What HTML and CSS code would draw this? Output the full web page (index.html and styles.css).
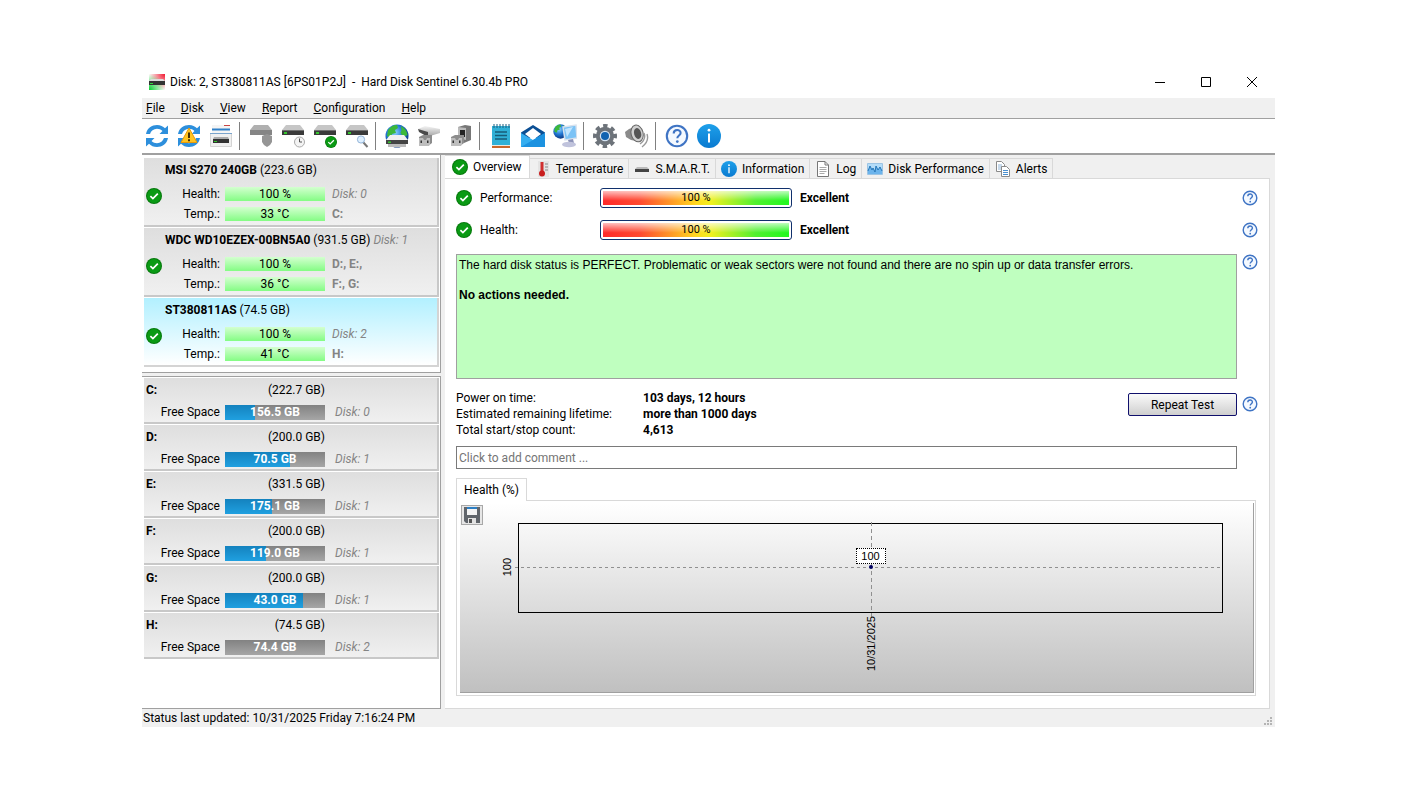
FILE: index.html
```html
<!DOCTYPE html>
<html lang="en">
<head>
  <meta charset="UTF-8">
  <meta name="viewport" content="width=device-width, initial-scale=1.0">
  <title>Hard Disk Sentinel 6.30.4b PRO</title>
  <link rel="stylesheet" href="styles.css">
</head>
<body>
  <!-- Shared icons -->
  <svg class="defs" aria-hidden="true">
    <defs>
      <linearGradient id="steel" x1="0" y1="0" x2="0" y2="1">
        <stop offset="0" stop-color="#f4f4f4"/><stop offset="1" stop-color="#a8a8a8"/>
      </linearGradient>
      <linearGradient id="azure" x1="0" y1="0" x2="0" y2="1">
        <stop offset="0" stop-color="#1ea0ea"/><stop offset="1" stop-color="#0a7ad0"/>
      </linearGradient>
      <radialGradient id="ocean" cx="0.4" cy="0.35" r="0.7">
        <stop offset="0" stop-color="#8fd6ff"/><stop offset="0.5" stop-color="#2277d4"/><stop offset="1" stop-color="#0a2f78"/>
      </radialGradient>
      <radialGradient id="logo-red" cx="1" cy="0" r="1">
        <stop offset="0" stop-color="#f01830"/><stop offset="1" stop-color="#f01830" stop-opacity="0"/>
      </radialGradient>
      <radialGradient id="logo-green" cx="0" cy="1" r="1">
        <stop offset="0" stop-color="#08d030"/><stop offset="1" stop-color="#08d030" stop-opacity="0"/>
      </radialGradient>
    </defs>
    <symbol id="ok" viewBox="0 0 16 16">
      <circle cx="8" cy="8" r="8" fill="#067a0c"/>
      <circle cx="8" cy="8" r="6.9" fill="#0a9a14"/>
      <path d="M4.4 8.2l2.5 2.4 4.9-5" fill="none" stroke="#fff" stroke-width="1.7"/>
    </symbol>
    <symbol id="help" viewBox="0 0 16 16">
      <circle cx="8" cy="8" r="6.8" fill="#f4f9ff" stroke="#3f74c4" stroke-width="1.4"/>
      <path d="M5.8 6.3c0-3 4.6-3 4.6-.3 0 1.7-2.2 1.7-2.2 3.5" fill="none" stroke="#3f74c4" stroke-width="1.4"/>
      <circle cx="8.2" cy="11.7" r="0.9" fill="#3f74c4"/>
    </symbol>
    <symbol id="info" viewBox="0 0 24 24">
      <circle cx="12" cy="12" r="12" fill="url(#azure)"/>
      <path d="M12 9.5v9" stroke="#fff" stroke-width="2"/>
      <circle cx="12" cy="6.2" r="1.4" fill="#fff"/>
    </symbol>
    <symbol id="sync" viewBox="0 0 24 24">
      <path d="M1 10C2 4 7 1 12 1c3.5 0 6 1.3 8 3.3L23 1.5V10h-8.5l3-3C16 5.5 14 4.8 12 4.8 8.5 4.8 6 7 5 10z" fill="#2d8fdc"/>
      <path d="M23 14c-1 6-6 9-11 9-3.5 0-6-1.3-8-3.3L1 22.5V14h8.500l-3 3c1.500 1.500 3.500 2.200 5.500 2.200 3.500 0 6-2.200 7-5.200z" fill="#2d8fdc"/>
    </symbol>
    <symbol id="drive" viewBox="0 0 24 24">
      <path d="M1 9L5 4h14l4 5z" fill="#c6c6c6"/>
      <path d="M1 9h22v5H1z" fill="#3a3a3a"/>
      <path d="M1 9h22v1H1z" fill="#707070"/>
      <path d="M3 11h3v2H3z" fill="#35c52e"/>
    </symbol>
    <symbol id="globe" viewBox="0 0 24 24">
      <circle cx="12" cy="12" r="11.5" fill="url(#ocean)"/>
      <path d="M3 6c3-4 6-5.3 9-5l1 3-3 2 1 3-4 1-1 4-4-2zM16 2c4 2 6 5 6.5 9l-4 2-3-4 1-3z" fill="#3cb83a"/>
    </symbol>
    <symbol id="plug" viewBox="0 0 24 24">
      <path d="M2 13l4-2h9v8l-4 3H2z" fill="#8c8c8c"/>
      <path d="M2 14h4l1 2h2l1-2h3v7l-2 1H2z" fill="#bdbdbd"/>
      <path d="M3.5 16.5H5V19H3.5zM10 16.5h1.5V19H10z" fill="#333"/>
    </symbol>
    <symbol id="page" viewBox="0 0 16 16">
      <path d="M2.5.5H10L13.500 4v11.500h-11z" fill="#fff" stroke="#777"/>
      <path d="M10 .5V4h3.500" fill="none" stroke="#777"/>
      <path d="M4.500 6.500h7M4.500 8.500h7M4.500 10.500h7M4.500 12.500h5" stroke="#aaa"/>
    </symbol>
  </svg>

  <main class="window">
    <header class="titlebar">
      <svg class="logo" viewBox="0 0 16 16">
        <path d="M0 0h16v16H0z" fill="#fff"/>
        <path d="M0 0h16v16H0z" fill="url(#logo-red)"/>
        <path d="M0 0h16v16H0z" fill="url(#logo-green)"/>
        <path d="M0 7l2-2h12l2 2z" fill="#ddd"/>
        <path d="M0 7h16v4H0z" fill="#333"/>
        <path d="M1 9h3v1H1z" fill="#2fd83a"/>
      </svg>
      <h1>Disk: 2, ST380811AS [6PS01P2J] &nbsp;- &nbsp;Hard Disk Sentinel 6.30.4b PRO</h1>
      <div class="controls">
        <button type="button" aria-label="Minimize"><svg viewBox="0 0 10 10"><path d="M0 5.5h10"/></svg></button>
        <button type="button" aria-label="Maximize"><svg viewBox="0 0 10 10"><path d="M.5.5h9v9h-9z"/></svg></button>
        <button type="button" aria-label="Close"><svg viewBox="0 0 10 10"><path d="M0 0l10 10M10 0L0 10"/></svg></button>
      </div>
    </header>

    <nav class="menu">
      <button type="button"><u>F</u>ile</button>
      <button type="button"><u>D</u>isk</button>
      <button type="button"><u>V</u>iew</button>
      <button type="button"><u>R</u>eport</button>
      <button type="button"><u>C</u>onfiguration</button>
      <button type="button"><u>H</u>elp</button>
    </nav>

    <div class="toolbar">
      <button type="button" aria-label="Refresh"><svg viewBox="0 0 24 24"><use href="#sync"/></svg></button>
      <button type="button" aria-label="Refresh warnings">
        <svg viewBox="0 0 24 24">
          <use href="#sync"/>
          <path d="M12 4l8 14.500H4z" fill="#ffc420" stroke="#e79a08" stroke-linejoin="round"/>
          <path d="M12 8.500v5.500M12 15.200v2" stroke="#332200" stroke-width="1.800"/>
        </svg>
      </button>
      <button type="button" aria-label="Disk window">
        <svg viewBox="0 0 24 24">
          <path d="M3 1h18v8H3z" fill="#f4f4f4"/>
          <path d="M15 1.500h6" stroke="#c84545"/>
          <path d="M3 5.500h18" stroke="#2f80c8" stroke-width="2"/>
          <path d="M1.500 9.500h21v13h-21z" fill="#f0f0f0" stroke="#d4d4d4"/>
          <path d="M1 9.500h22" stroke="#7aa4cc"/>
          <path d="M4 15l1-2h14l1 2z" fill="#aaa"/>
          <path d="M4 15h16v4H4z" fill="#333"/>
          <path d="M5 17h3v1H5z" fill="#35c52e"/>
        </svg>
      </button>
      <span class="sep"></span>
      <button type="button" aria-label="Remove disk">
        <svg viewBox="0 0 24 24">
          <path d="M1 6l4-5h14l4 5v1H1z" fill="#b0b0b0"/>
          <path d="M1 6h22v5H1z" fill="#858585"/>
          <path d="M13 12l5-2 5 2v6l-2 3-3 2-3-2-2-3z" fill="#959595"/>
        </svg>
      </button>
      <button type="button" aria-label="Short self test">
        <svg viewBox="0 0 24 24">
          <use href="#drive" y="-3"/>
          <circle cx="18.500" cy="18" r="5" fill="#f4f4f4" stroke="#aaa"/>
          <path d="M18.500 14.500V18H21" fill="none" stroke="#555"/>
        </svg>
      </button>
      <button type="button" aria-label="Extended self test">
        <svg viewBox="0 0 24 24"><use href="#drive" y="-3"/><use href="#ok" x="12" y="12" width="12" height="12"/></svg>
      </button>
      <button type="button" aria-label="Surface test">
        <svg viewBox="0 0 24 24">
          <use href="#drive" y="-3"/>
          <path d="M18 18l4.500 5" stroke="#777" stroke-width="2"/>
          <circle cx="16" cy="15.500" r="3.600" fill="#dff0ff" stroke="#93b4d8"/>
        </svg>
      </button>
      <span class="sep"></span>
      <button type="button" aria-label="Online disk">
        <svg viewBox="0 0 24 24">
          <use href="#globe"/>
          <path d="M1 16l4-5h14l4 5z" fill="#f0f0f0"/>
          <path d="M1 16h22v4H1z" fill="#444"/>
          <path d="M3 21.500h18" stroke="#bbb" stroke-width="3"/>
          <path d="M3 17.500h3v1.500H3z" fill="#35c52e"/>
        </svg>
      </button>
      <button type="button" aria-label="Connect disk">
        <svg viewBox="0 0 24 24">
          <path d="M1 5l7-3 15 3v4l-10 3z" fill="url(#steel)"/>
          <path d="M1 5l10 3v5l-9-5z" fill="#4a4a4a"/>
          <use href="#plug"/>
        </svg>
      </button>
      <button type="button" aria-label="Power connector">
        <svg viewBox="0 0 24 24">
          <path d="M9 3l7-2 6 1v14l-7 3-6-3z" fill="#777"/>
          <path d="M9 3l8 1v12l-8-2z" fill="#bbb"/>
          <path d="M11 6h5v7h-5z" fill="#222"/>
          <use href="#plug"/>
        </svg>
      </button>
      <span class="sep"></span>
      <button type="button" aria-label="Report">
        <svg viewBox="0 0 24 24">
          <path d="M3 2h18v19H3z" fill="#30b0d6"/>
          <path d="M3 22h18v2H3z" fill="#c8672c"/>
          <path d="M3 21h18v1H3z" fill="#f0e8dc"/>
          <path d="M5 0v4M8 0v4M11 0v4M14 0v4M17 0v4M20 0v4" stroke="#1b5f80"/>
          <path d="M6 8h12M6 11.500h12M6 15h12" stroke="#175c78" stroke-width="1.300"/>
        </svg>
      </button>
      <button type="button" aria-label="Send e-mail">
        <svg viewBox="0 0 24 24">
          <path d="M0 8.500L12 1l12 7.500V14H0z" fill="#0b4f94"/>
          <path d="M4 10l8-6 8 6-8 6z" fill="#fff"/>
          <path d="M0 9l12 7 12-7v14H0z" fill="#35aef0"/>
          <path d="M0 23l24-14v14z" fill="#1c92e0"/>
        </svg>
      </button>
      <button type="button" aria-label="Network">
        <svg viewBox="0 0 24 24">
          <use href="#globe" width="15" height="15"/>
          <path d="M10 3l13-2 1 13-12 2z" fill="#7cc3f6" stroke="#d8e2ee" stroke-width="1.500"/>
          <path d="M12 5l8-2-6 10z" fill="#c3e6ff"/>
          <path d="M15 16l5-1 1 4h-5z" fill="#8d93b8"/>
          <ellipse cx="16" cy="20.500" rx="7" ry="2.800" fill="#c0c3dc"/>
        </svg>
      </button>
      <span class="sep"></span>
      <button type="button" aria-label="Settings">
        <svg viewBox="0 0 24 24">
          <circle cx="12" cy="12" r="10" fill="none" stroke="#6d737a" stroke-width="4" stroke-dasharray="4.200 3.654" transform="rotate(-12 12 12)"/>
          <circle cx="12" cy="12" r="7.200" fill="#d6e5f4" stroke="#6d737a" stroke-width="4"/>
          <circle cx="12" cy="12" r="4" fill="#1263b0"/>
        </svg>
      </button>
      <button type="button" aria-label="Sounds">
        <svg viewBox="0 0 24 24">
          <path d="M0 8l4-3L14 1l2 17-10-2-5-3z" fill="#8b8b8b"/>
          <ellipse cx="12" cy="9.500" rx="6" ry="8.500" transform="rotate(-15 12 9)" fill="#d0d0d0" stroke="#666"/>
          <ellipse cx="12.500" cy="9.500" rx="3.500" ry="5.500" transform="rotate(-15 12.500 9)" fill="#555"/>
          <path d="M19 9c2 5 0 8-4 11M22 10c2 6-1 10-5 13" fill="none" stroke="#999" stroke-width="1.400"/>
        </svg>
      </button>
      <span class="sep"></span>
      <button type="button" aria-label="Help"><svg viewBox="0 0 16 16"><use href="#help"/></svg></button>
      <button type="button" aria-label="About"><svg viewBox="0 0 24 24"><use href="#info"/></svg></button>
    </div>

    <div class="workspace">
      <aside class="sidebar">
        <section class="list disks">
          <article class="disk">
            <h2>MSI S270 240GB <span>(223.6 GB)</span></h2>
            <svg class="status"><use href="#ok"/></svg>
            <div class="row"><span class="label">Health:</span><span class="bar">100 %</span><i>Disk: 0</i></div>
            <div class="row"><span class="label">Temp.:</span><span class="bar">33 °C</span><b>C:</b></div>
          </article>
          <article class="disk">
            <h2>WDC WD10EZEX-00BN5A0 <span>(931.5 GB)</span> <i>Disk: 1</i></h2>
            <svg class="status"><use href="#ok"/></svg>
            <div class="row"><span class="label">Health:</span><span class="bar">100 %</span><b>D:, E:,</b></div>
            <div class="row"><span class="label">Temp.:</span><span class="bar">36 °C</span><b>F:, G:</b></div>
          </article>
          <article class="disk selected">
            <h2>ST380811AS <span>(74.5 GB)</span></h2>
            <svg class="status"><use href="#ok"/></svg>
            <div class="row"><span class="label">Health:</span><span class="bar">100 %</span><i>Disk: 2</i></div>
            <div class="row"><span class="label">Temp.:</span><span class="bar">41 °C</span><b>H:</b></div>
          </article>
        </section>

        <section class="list volumes">
          <article class="volume">
            <div class="name"><b>C:</b><span>(222.7 GB)</span></div>
            <div class="row"><span class="label">Free Space</span><span class="space"><span class="used" style="width: 30%"></span><span class="amount">156.5 GB</span></span><i>Disk: 0</i></div>
          </article>
          <article class="volume">
            <div class="name"><b>D:</b><span>(200.0 GB)</span></div>
            <div class="row"><span class="label">Free Space</span><span class="space"><span class="used" style="width: 65%"></span><span class="amount">70.5 GB</span></span><i>Disk: 1</i></div>
          </article>
          <article class="volume">
            <div class="name"><b>E:</b><span>(331.5 GB)</span></div>
            <div class="row"><span class="label">Free Space</span><span class="space"><span class="used" style="width: 47%"></span><span class="amount">175.1 GB</span></span><i>Disk: 1</i></div>
          </article>
          <article class="volume">
            <div class="name"><b>F:</b><span>(200.0 GB)</span></div>
            <div class="row"><span class="label">Free Space</span><span class="space"><span class="used" style="width: 41%"></span><span class="amount">119.0 GB</span></span><i>Disk: 1</i></div>
          </article>
          <article class="volume">
            <div class="name"><b>G:</b><span>(200.0 GB)</span></div>
            <div class="row"><span class="label">Free Space</span><span class="space"><span class="used" style="width: 78%"></span><span class="amount">43.0 GB</span></span><i>Disk: 1</i></div>
          </article>
          <article class="volume">
            <div class="name"><b>H:</b><span>(74.5 GB)</span></div>
            <div class="row"><span class="label">Free Space</span><span class="space"><span class="used" style="width: 0%"></span><span class="amount">74.4 GB</span></span><i>Disk: 2</i></div>
          </article>
        </section>
      </aside>

      <section class="details">
        <nav class="tabs">
          <button type="button" class="tab active"><svg><use href="#ok"/></svg>Overview</button>
          <button type="button" class="tab">
            <svg viewBox="0 0 16 16">
              <path d="M3 0h11v16H3z" fill="#e4e4e4"/>
              <path d="M10 3h3M10 6h3M10 9h3" stroke="#888"/>
              <path d="M7 1v11" stroke="#d03030" stroke-width="3"/>
              <circle cx="7" cy="12.500" r="3" fill="#c81e1e"/>
            </svg>Temperature
          </button>
          <button type="button" class="tab">
            <svg viewBox="0 0 16 16">
              <path d="M1 8l2-2h10l2 2z" fill="#bbb"/>
              <path d="M1 8h14v3H1z" fill="#444"/>
            </svg>S.M.A.R.T.
          </button>
          <button type="button" class="tab"><svg><use href="#info"/></svg>Information</button>
          <button type="button" class="tab"><svg><use href="#page"/></svg>Log</button>
          <button type="button" class="tab">
            <svg viewBox="0 0 16 16">
              <path d="M.5 2.500h15v11H.5z" fill="#b4dcf8" stroke="#9cc4e4"/>
              <path d="M1 10l2-5 2 4 1-2 2 4 1-6 2 4 2-3 2 4v3H1z" fill="#6cb4ec"/>
              <path d="M1 10l2-5 2 4 1-2 2 4 1-6 2 4 2-3 2 4" fill="none" stroke="#2476b8"/>
            </svg>Disk Performance
          </button>
          <button type="button" class="tab">
            <svg viewBox="0 0 16 16">
              <path d="M1.500.5h5l3 3v7h-8z" fill="#fff" stroke="#8a8a8a"/>
              <path d="M3 4h4M3 6h4M3 8h4" stroke="#8fb4d8"/>
              <path d="M6.500 5.500h5l3 3v7h-8z" fill="#fff" stroke="#8a8a8a"/>
              <path d="M8 9.500h5M8 11.500h5M8 13.500h5" stroke="#4a90d0"/>
            </svg>Alerts
          </button>
        </nav>

        <div class="overview">
          <div class="score">
            <svg class="status"><use href="#ok"/></svg>
            <span class="label">Performance:</span>
            <span class="meter"><span>100 %</span></span>
            <b>Excellent</b>
            <button type="button" class="help" aria-label="Performance help"><svg><use href="#help"/></svg></button>
          </div>
          <div class="score">
            <svg class="status"><use href="#ok"/></svg>
            <span class="label">Health:</span>
            <span class="meter"><span>100 %</span></span>
            <b>Excellent</b>
            <button type="button" class="help" aria-label="Health help"><svg><use href="#help"/></svg></button>
          </div>

          <div class="report">
            <div class="message">
              <p>The hard disk status is PERFECT. Problematic or weak sectors were not found and there are no spin up or data transfer errors.</p>
              <p><b>No actions needed.</b></p>
            </div>
            <button type="button" class="help" aria-label="Status help"><svg><use href="#help"/></svg></button>
          </div>

          <div class="stats">
            <dl>
              <dt>Power on time:</dt><dd>103 days, 12 hours</dd>
              <dt>Estimated remaining lifetime:</dt><dd>more than 1000 days</dd>
              <dt>Total start/stop count:</dt><dd>4,613</dd>
            </dl>
            <button type="button" class="repeat">Repeat Test</button>
            <button type="button" class="help" aria-label="Test help"><svg><use href="#help"/></svg></button>
          </div>

          <input class="comment" type="text" aria-label="Comment" placeholder="Click to add comment ...">

          <div class="graph">
            <button type="button" class="graph-tab">Health (%)</button>
            <div class="frame">
              <div class="canvas">
                <button type="button" class="save" aria-label="Save graph">
                  <svg viewBox="0 0 16 16">
                    <path d="M0 0h16v16H2l-2-2z" fill="#60656b"/>
                    <path d="M3 1h10v7H3z" fill="#f4f4f4"/>
                    <path d="M3 0h10v2H3z" fill="#2d7fc4"/>
                    <path d="M4 11h8v5H4z" fill="#e2e2e2"/>
                    <path d="M5 12h3v4H5z" fill="#555"/>
                  </svg>
                </button>
                <div class="plot">
                  <span class="grid-x"></span>
                  <span class="grid-y"></span>
                  <span class="point"></span>
                  <span class="value">100</span>
                  <span class="axis-y">100</span>
                  <span class="axis-x">10/31/2025</span>
                </div>
              </div>
            </div>
          </div>
        </div>
      </section>
    </div>

    <footer class="statusbar">
      <span>Status last updated: 10/31/2025 Friday 7:16:24 PM</span>
      <svg viewBox="0 0 12 12">
        <path d="M8 2h2v2H8zM5 5h2v2H5zM8 5h2v2H8zM2 8h2v2H2zM5 8h2v2H5zM8 8h2v2H8z" fill="#b4b4b4"/>
      </svg>
    </footer>
  </main>
</body>
</html>
```

FILE: styles.css
```css
* {
  box-sizing: border-box;
}
body {
  margin: 0;
  padding: 66px 141px 66px 142px;
  background: #fff;
  color: #000;
  font-family: Roboto, "Noto Sans", sans-serif;
  font-size: 12px;
  line-height: 20px;
}
button {
  font: inherit;
  color: inherit;
  background: none;
  border: 0;
  padding: 0;
}
h1, h2, p, dl, dd {
  margin: 0;
  font-size: 12px;
}
.defs {
  position: absolute;
  width: 0;
  height: 0;
}

/* Title bar and menu */
.titlebar {
  display: flex;
  align-items: center;
  height: 32px;
  padding-left: 7px;
}
.logo {
  width: 16px;
  height: 16px;
  margin-right: 5px;
}
.titlebar h1 {
  flex: 1;
  font-weight: normal;
}
.controls {
  display: flex;
}
.controls button {
  width: 46px;
  height: 32px;
  display: flex;
  align-items: center;
  justify-content: center;
}
.controls svg {
  width: 10px;
  height: 10px;
  fill: none;
  stroke: #000;
}
.menu {
  display: flex;
  gap: 16px;
  padding: 0 4px;
  background: #f0f0f0;
}
.toolbar {
  display: flex;
  align-items: center;
  height: 37px;
  border-top: 1px solid #a0a0a0;
  border-bottom: 2px solid #a0a0a0;
}
.toolbar button {
  width: 32px;
  height: 32px;
  padding-right: 2px;
  display: flex;
  align-items: center;
  justify-content: center;
}
.toolbar svg {
  width: 24px;
  height: 24px;
}
.sep {
  width: 8px;
  height: 28px;
  background: linear-gradient(to right, #fff 1px, #808080 1px 2px, #fff 2px);
}

/* Left lists */
.workspace {
  display: flex;
  min-height: 554px;
  padding-right: 5px;
  background: #f0f0f0;
}
.sidebar {
  width: 299px;
  margin-right: 4px;
  display: flex;
  flex-direction: column;
  gap: 3px;
}
.list {
  padding: 3px 1px 5px 2px;
  background: #fff;
  border-right: 1px solid #a0a0a0;
  border-bottom: 1px solid #a0a0a0;
  display: flex;
  flex-direction: column;
  gap: 1px;
}
.volumes {
  flex: 1;
  padding-top: 1px;
  border-top: 1px solid #a0a0a0;
}
.disk, .volume {
  position: relative;
  background: linear-gradient(#dedede, #f0f0f0);
  border-right: 2px solid #c8c8c8;
  border-bottom: 2px solid #c8c8c8;
}
.disk {
  padding: 2px 0 1px;
}
.disk.selected {
  background: linear-gradient(#b2f0ff, #fff);
  border-color: #d4d4d4;
}
.disk h2 {
  margin-bottom: 4px;
  padding-left: 21px;
}
.disk h2 span, .disk h2 i {
  font-weight: normal;
}
.status {
  width: 16px;
  height: 16px;
}
.disk .status {
  position: absolute;
  left: 2px;
  top: 30px;
}
.row {
  display: flex;
  align-items: center;
}
.row .label {
  width: 76px;
  text-align: right;
}
.row i, .row b, .disk i {
  color: #848484;
}
.row i, .row b {
  margin-left: 7px;
}
.bar {
  width: 100px;
  height: 14px;
  margin-left: 5px;
  line-height: 14px;
  text-align: center;
  background: linear-gradient(#d4ffd0, #84fc84);
}
.volume {
  padding-top: 2px;
}
.volume .name {
  display: flex;
  justify-content: space-between;
  width: 181px;
  padding-left: 2px;
  margin-bottom: 2px;
}
.volume .row i {
  margin-left: 10px;
}
.space {
  position: relative;
  width: 100px;
  height: 15px;
  margin-left: 5px;
  background: linear-gradient(#828282, #a6a6a6);
}
.used {
  position: absolute;
  top: 0;
  left: 0;
  height: 100%;
  background: linear-gradient(#1482be, #20a0e0);
}
.amount {
  position: absolute;
  inset: 0;
  line-height: 15px;
  text-align: center;
  font-weight: bold;
  color: #fff;
}

/* Details */
.details {
  flex: 1;
  display: flex;
  flex-direction: column;
}
.tabs {
  display: flex;
  align-items: flex-end;
}
.tab {
  display: flex;
  align-items: center;
  gap: 5px;
  height: 20px;
  padding: 0 5px;
  border: 1px solid #d9d9d9;
  border-width: 1px 1px 0 0;
}
.tab svg {
  width: 16px;
  height: 16px;
}
.tab.active {
  height: 23px;
  padding: 0 7px;
  background: #fff;
}
.overview {
  flex: 1;
  padding: 9px 11px 12px 11px;
  background: #fff;
  border: 1px solid #d9d9d9;
  border-left: 0;
}
.score {
  display: flex;
  align-items: center;
  height: 20px;
  margin-bottom: 12px;
}
.score .label {
  width: 120px;
  margin-left: 8px;
}
.meter {
  width: 192px;
  height: 20px;
  margin-right: 8px;
  padding: 2px;
  border: 1px solid #10306c;
  border-radius: 3px;
}
.meter span {
  display: block;
  height: 14px;
  line-height: 14px;
  font-size: 11px;
  text-align: center;
  background: linear-gradient(rgba(255, 255, 255, 0.7), rgba(255, 255, 255, 0) 70%), linear-gradient(to right, #ff2a2a, #ff4a30 20%, #ffd820 50%, #f0f020 58%, #50f030 82%, #20f820);
}
.help {
  width: 16px;
  height: 16px;
  margin-left: auto;
}
.help svg {
  display: block;
  width: 16px;
  height: 16px;
}
.report {
  display: flex;
  gap: 5px;
  margin: 14px 0 11px;
}
.message {
  flex: 1;
  min-height: 125px;
  padding: 3px 2px;
  border: 1px solid #a0a0a0;
  background: #bfffbf;
  font-family: "Liberation Sans", Arial, sans-serif;
  line-height: 15px;
}
.message p {
  margin-bottom: 15px;
}
.stats {
  display: flex;
  gap: 5px;
  line-height: 16px;
}
.stats dl {
  flex: 1;
  display: grid;
  grid-template-columns: 187px 1fr;
}
.stats dd {
  font-weight: bold;
}
.repeat {
  width: 109px;
  height: 23px;
  margin-top: 3px;
  border: 1px solid #10106c;
  border-radius: 2px;
  background: linear-gradient(#fafafa, #cfcfcf);
}
.stats .help {
  margin-top: 6px;
}
.comment {
  display: block;
  width: calc(100% - 21px);
  height: 23px;
  margin-top: 8px;
  padding: 0 2px;
  border: 1px solid #7a7a7a;
  font: inherit;
}
.comment::placeholder {
  color: #757575;
}

/* Health graph */
.graph {
  margin: 9px 2px 0 0;
}
.graph-tab {
  position: relative;
  display: block;
  height: 23px;
  margin-bottom: -1px;
  padding: 0 7px;
  border: 1px solid #d9d9d9;
  border-bottom: 0;
  background: #fff;
}
.frame {
  padding: 2px 1px 2px 3px;
  border: 1px solid #d9d9d9;
}
.canvas {
  padding: 2px 30px 79px 1px;
  border-right: 1px solid #a0a0a0;
  border-bottom: 1px solid #a0a0a0;
  background: linear-gradient(#fff, #c0c0c0);
}
.save {
  display: block;
  width: 22px;
  height: 20px;
  margin-bottom: -2px;
  border: 1px solid #a8a8a8;
  background: #e6e6e6;
}
.save svg {
  display: block;
  width: 16px;
  height: 16px;
  margin: auto;
}
.plot {
  position: relative;
  height: 90px;
  margin-left: 57px;
  border: 1px solid #000;
  font-family: "Liberation Sans", Arial, sans-serif;
  font-size: 11px;
  line-height: 14px;
}
.plot span {
  position: absolute;
}
.grid-x {
  left: -4px;
  right: 0;
  top: 43px;
  height: 1px;
  background: repeating-linear-gradient(to right, #909090 0 3px, transparent 3px 6px);
}
.grid-y {
  left: 50%;
  top: -2px;
  bottom: -5px;
  width: 1px;
  background: repeating-linear-gradient(#909090 0 4px, transparent 4px 7px);
}
.point {
  left: 50%;
  top: 43px;
  width: 4px;
  height: 4px;
  margin: -2px;
  border-radius: 2px;
  background: #000060;
}
.value {
  left: 50%;
  top: 24px;
  width: 30px;
  height: 16px;
  margin-left: -15px;
  border: 1px dotted #000;
  background: #fff;
  text-align: center;
}
.axis-y, .axis-x {
  writing-mode: vertical-rl;
  rotate: 180deg;
}
.axis-y {
  left: -19px;
  top: 34px;
}
.axis-x {
  left: 50%;
  top: 92px;
  margin-left: -7px;
}

.statusbar {
  display: flex;
  justify-content: space-between;
  align-items: flex-end;
  padding: 0 1px;
  line-height: 18px;
  background: #f0f0f0;
}
.statusbar svg {
  width: 12px;
  height: 12px;
}
```
